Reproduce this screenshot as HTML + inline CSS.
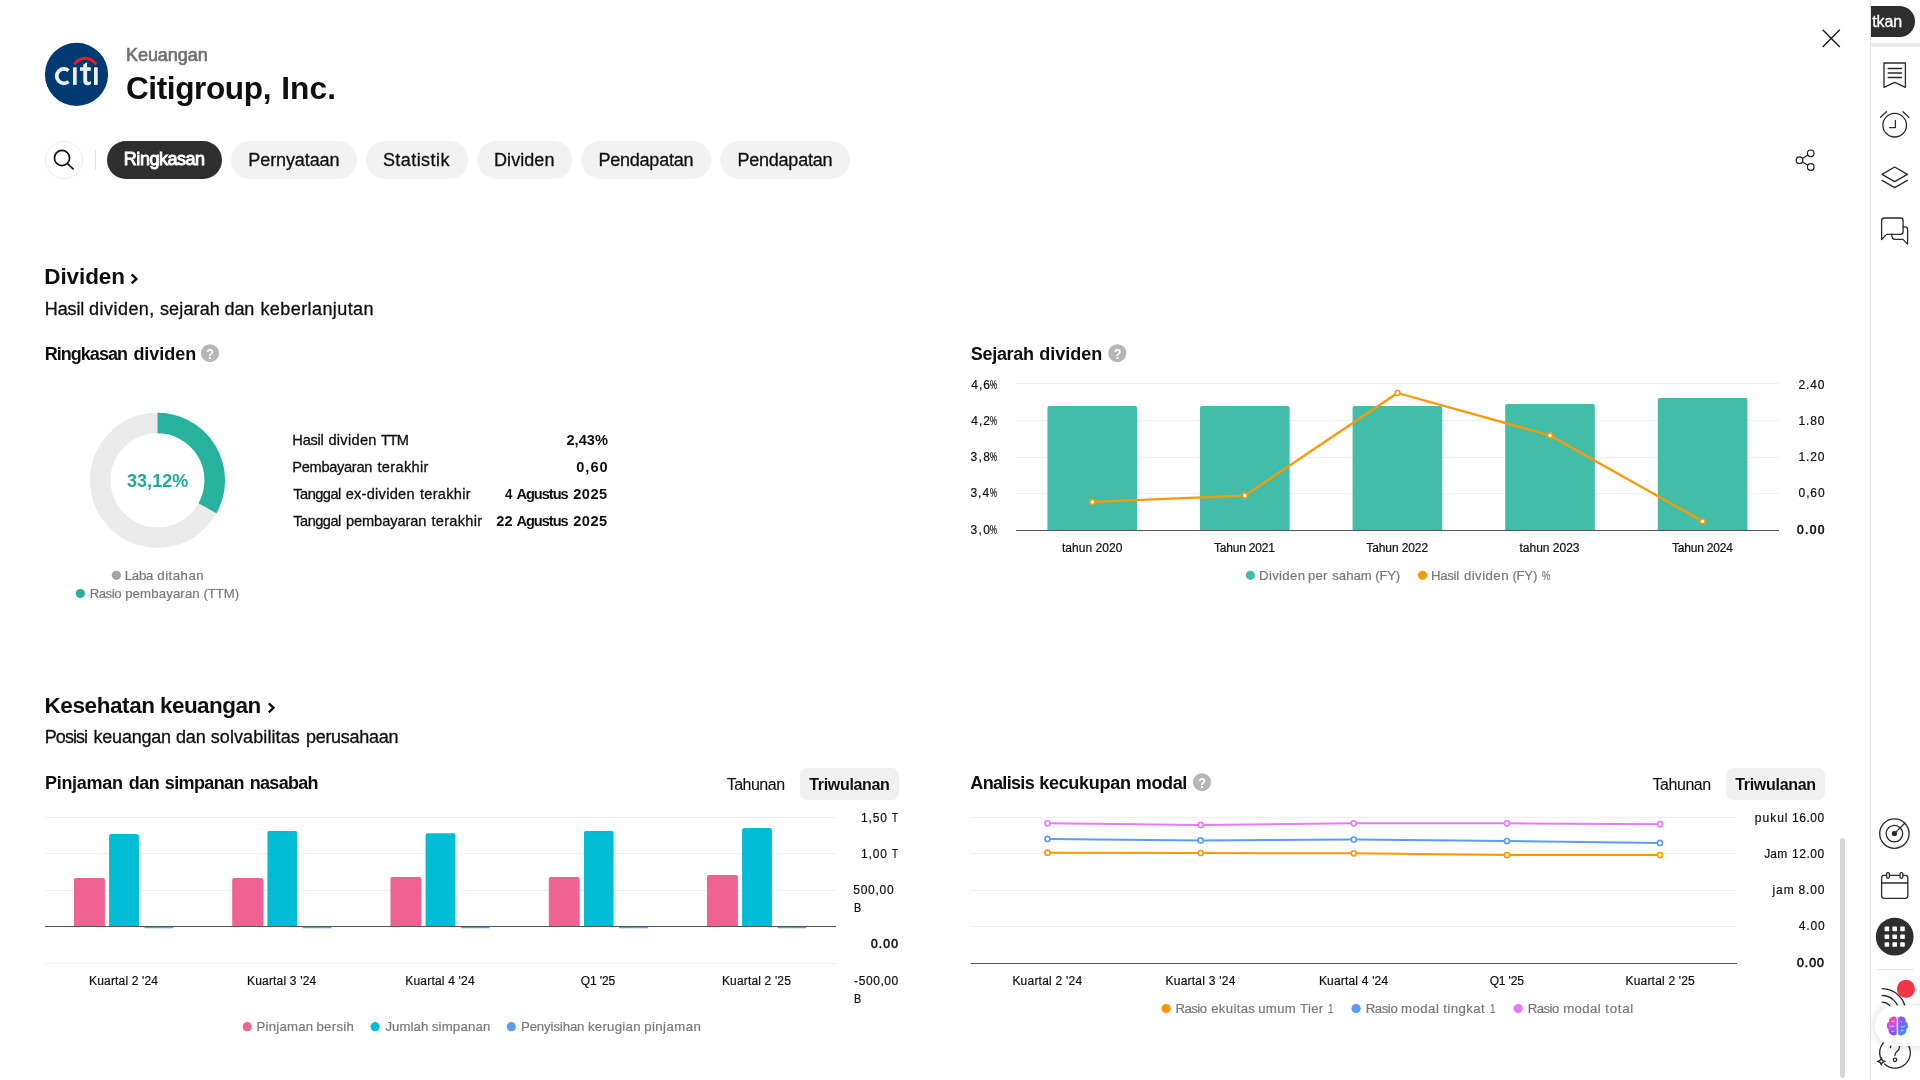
<!DOCTYPE html>
<html lang="id">
<head>
<meta charset="utf-8">
<title>Citigroup, Inc. — Keuangan</title>
<style>
html,body{margin:0;padding:0;}
body{width:1920px;height:1080px;overflow:hidden;background:#ffffff;position:relative;font-family:"Liberation Sans",sans-serif;}
.t{position:absolute;white-space:pre;line-height:1;font-family:"Liberation Sans",sans-serif;color:#0f0f0f;}
.pill{position:absolute;top:141px;height:38px;border-radius:19px;background:#f2f2f2;}
.pill.on{background:#2e2e2e;}
.seg{position:absolute;top:768px;height:32px;border-radius:7px;background:#f0f0f0;}
#txt{position:absolute;left:0;top:0;width:1920px;height:1080px;will-change:transform;}
#shapes{position:absolute;left:0;top:0;width:1920px;height:1080px;will-change:transform;}
</style>
</head>
<body>
<!-- nav pills -->
<div class="pill on" style="left:107px;width:115px"></div>
<div class="pill" style="left:231px;width:126px"></div>
<div class="pill" style="left:366px;width:102px"></div>
<div class="pill" style="left:476.5px;width:95px"></div>
<div class="pill" style="left:580.5px;width:130px"></div>
<div class="pill" style="left:719.5px;width:130px"></div>
<!-- period toggles -->
<div class="seg" style="left:800px;width:99px"></div>
<div class="seg" style="left:1726px;width:99px"></div>
<svg id="shapes" width="1920" height="1080" viewBox="0 0 1920 1080">
<g id="logo">
<circle cx="76.5" cy="74.4" r="31.6" fill="#003a72"/>
<path d="M68.53 70.58 A7.2 7.2 0 1 0 68.53 81.62" fill="none" stroke="#eef1f8" stroke-width="3.7"/>
<rect x="73" y="67.3" width="3.7" height="17.6" fill="#eef1f8"/>
<rect x="94" y="67.3" width="3.7" height="17.6" fill="#eef1f8"/>
<rect x="80" y="67.3" width="10.8" height="3.5" fill="#eef1f8"/>
<path d="M83.3 64.4 L87.1 62.3 V80.3 Q87.1 82 88.7 82 Q89.9 82 90.9 81.1 V84 Q89.5 85.2 87.6 85.2 Q83.3 85.2 83.3 81 Z" fill="#eef1f8"/>
<path d="M74.2 64.2 Q85.2 52.3 96.2 64.2" fill="none" stroke="#ee1c25" stroke-width="3"/>
</g>
<g id="search">
<circle cx="64" cy="160" r="18.5" fill="#fff" stroke="#ebebeb" stroke-width="1"/>
<circle cx="62" cy="158" r="7.55" fill="none" stroke="#131313" stroke-width="1.7"/>
<path d="M67.5 163.6 L73.6 169.4" stroke="#131313" stroke-width="1.7" fill="none"/>
<rect x="95" y="150" width="1" height="19.5" fill="#e0e0e0"/>
</g>
<path d="M1822.7 29.8 L1839.8 46.9 M1839.8 29.8 L1822.7 46.9" stroke="#1a1a1a" stroke-width="1.4" fill="none"/>
<g fill="none" stroke="#1a1a1a" stroke-width="1.2"><circle cx="1810.75" cy="153.3" r="3.3"/><circle cx="1799.5" cy="160.2" r="3.3"/><circle cx="1810.75" cy="167" r="3.3"/><path d="M1802.4 158.5 L1807.9 155 M1802.4 161.9 L1807.9 165.3"/></g>
<path d="M131.7 274.4 L136.4 278.9 L131.7 283.4" stroke="#0f0f0f" stroke-width="2.3" fill="none"/>
<path d="M268.8 703.3 L273.5 707.8 L268.8 712.3" stroke="#0f0f0f" stroke-width="2.3" fill="none"/>
<circle cx="210" cy="353.2" r="9" fill="#b6b6b6"/>
<text transform="translate(210.2 358.9) scale(0.87 1.06)" x="0" y="0" font-family="Liberation Sans, sans-serif" font-size="14.5" font-weight="700" fill="#fff" text-anchor="middle">?</text>
<circle cx="1117.3" cy="353.2" r="9" fill="#b6b6b6"/>
<text transform="translate(1117.5 358.9) scale(0.87 1.06)" x="0" y="0" font-family="Liberation Sans, sans-serif" font-size="14.5" font-weight="700" fill="#fff" text-anchor="middle">?</text>
<circle cx="1202" cy="782.2" r="9" fill="#b6b6b6"/>
<text transform="translate(1202.2 787.9000000000001) scale(0.87 1.06)" x="0" y="0" font-family="Liberation Sans, sans-serif" font-size="14.5" font-weight="700" fill="#fff" text-anchor="middle">?</text>
<circle cx="157.5" cy="480.3" r="57.25" fill="none" stroke="#ebebeb" stroke-width="20.5"/>
<path d="M157.5 423.05 A57.25 57.25 0 0 1 207.46 508.26" fill="none" stroke="#26b29d" stroke-width="20.5"/>
<circle cx="116.4" cy="575.3" r="4.6" fill="#a3a3a3"/>
<circle cx="80.4" cy="593.5" r="4.6" fill="#26b29d"/>
<rect x="1016" y="383" width="763" height="1" fill="#f0f0f0"/>
<rect x="1016" y="420" width="763" height="1" fill="#f0f0f0"/>
<rect x="1016" y="457" width="763" height="1" fill="#f0f0f0"/>
<rect x="1016" y="493" width="763" height="1" fill="#f0f0f0"/>
<path d="M1047.4 530 V408.0 Q1047.4 406.0 1049.4 406.0 H1135.0 Q1137.0 406.0 1137.0 408.0 V530 Z" fill="#42bda8"/>
<path d="M1200.0 530 V408.0 Q1200.0 406.0 1202.0 406.0 H1287.6 Q1289.6 406.0 1289.6 408.0 V530 Z" fill="#42bda8"/>
<path d="M1352.6 530 V408.0 Q1352.6 406.0 1354.6 406.0 H1440.2 Q1442.2 406.0 1442.2 408.0 V530 Z" fill="#42bda8"/>
<path d="M1505.2 530 V406.0 Q1505.2 404.0 1507.2 404.0 H1592.8 Q1594.8 404.0 1594.8 406.0 V530 Z" fill="#42bda8"/>
<path d="M1657.8 530 V400.0 Q1657.8 398.0 1659.8 398.0 H1745.4 Q1747.4 398.0 1747.4 400.0 V530 Z" fill="#42bda8"/>
<rect x="1016" y="530" width="763" height="1" fill="#555"/>
<polyline points="1092.3,501.9 1244.7,495.6 1397.5,393 1550,435.5 1702.5,521.25" fill="none" stroke="#ff9800" stroke-width="2.3" stroke-linejoin="round"/>
<circle cx="1092.3" cy="501.9" r="2.5" fill="#fff" stroke="#ff9800" stroke-width="1.5"/>
<circle cx="1244.7" cy="495.6" r="2.5" fill="#fff" stroke="#ff9800" stroke-width="1.5"/>
<circle cx="1397.5" cy="393" r="2.5" fill="#fff" stroke="#ff9800" stroke-width="1.5"/>
<circle cx="1550" cy="435.5" r="2.5" fill="#fff" stroke="#ff9800" stroke-width="1.5"/>
<circle cx="1702.5" cy="521.25" r="2.5" fill="#fff" stroke="#ff9800" stroke-width="1.5"/>
<circle cx="1250.4" cy="575.3" r="4.6" fill="#42bda8"/>
<circle cx="1422.5" cy="575.3" r="4.6" fill="#ff9800"/>
<rect x="45" y="817" width="791" height="1" fill="#f0f0f0"/>
<rect x="45" y="853" width="791" height="1" fill="#f0f0f0"/>
<rect x="45" y="890" width="791" height="1" fill="#f0f0f0"/>
<rect x="45" y="963" width="791" height="1" fill="#f0f0f0"/>
<path d="M74.0 926.0 V880.0 Q74.0 878.0 76.0 878.0 H102.9 Q104.9 878.0 104.9 880.0 V926.0 Z" fill="#f06292"/>
<path d="M109.1 926.0 V836.0 Q109.1 834.0 111.1 834.0 H136.9 Q138.9 834.0 138.9 836.0 V926.0 Z" fill="#00bcd4"/>
<rect x="144.3" y="926.4" width="29" height="1.8" rx="0.9" fill="#5b9cf6"/>
<path d="M232.2 926.0 V880.0 Q232.2 878.0 234.2 878.0 H261.1 Q263.1 878.0 263.1 880.0 V926.0 Z" fill="#f06292"/>
<path d="M267.4 926.0 V833.0 Q267.4 831.0 269.4 831.0 H295.2 Q297.2 831.0 297.2 833.0 V926.0 Z" fill="#00bcd4"/>
<rect x="302.6" y="926.4" width="29" height="1.8" rx="0.9" fill="#5b9cf6"/>
<path d="M390.5 926.0 V878.9 Q390.5 876.9 392.5 876.9 H419.4 Q421.4 876.9 421.4 878.9 V926.0 Z" fill="#f06292"/>
<path d="M425.6 926.0 V835.2 Q425.6 833.2 427.6 833.2 H453.4 Q455.4 833.2 455.4 835.2 V926.0 Z" fill="#00bcd4"/>
<rect x="460.8" y="926.4" width="29" height="1.8" rx="0.9" fill="#5b9cf6"/>
<path d="M548.8 926.0 V879.1 Q548.8 877.1 550.8 877.1 H577.6 Q579.6 877.1 579.6 879.1 V926.0 Z" fill="#f06292"/>
<path d="M583.9 926.0 V833.0 Q583.9 831.0 585.9 831.0 H611.6 Q613.6 831.0 613.6 833.0 V926.0 Z" fill="#00bcd4"/>
<rect x="619.0" y="926.4" width="29" height="1.8" rx="0.9" fill="#5b9cf6"/>
<path d="M707.0 926.0 V877.0 Q707.0 875.0 709.0 875.0 H735.9 Q737.9 875.0 737.9 877.0 V926.0 Z" fill="#f06292"/>
<path d="M742.1 926.0 V829.9 Q742.1 827.9 744.1 827.9 H769.9 Q771.9 827.9 771.9 829.9 V926.0 Z" fill="#00bcd4"/>
<rect x="777.3" y="926.4" width="29" height="1.8" rx="0.9" fill="#5b9cf6"/>
<rect x="45" y="926" width="791" height="1" fill="#555"/>
<circle cx="247.2" cy="1026.7" r="4.6" fill="#f06292"/>
<circle cx="375.1" cy="1026.7" r="4.6" fill="#00bcd4"/>
<circle cx="511.3" cy="1026.7" r="4.6" fill="#5b9cf6"/>
<rect x="971" y="817" width="766" height="1" fill="#f0f0f0"/>
<rect x="971" y="853" width="766" height="1" fill="#f0f0f0"/>
<rect x="971" y="890" width="766" height="1" fill="#f0f0f0"/>
<rect x="971" y="926" width="766" height="1" fill="#f0f0f0"/>
<rect x="971" y="963" width="766" height="1" fill="#555"/>
<polyline points="1047.5,852.7 1200.6,853 1353.7,853.3 1506.9,855.1 1660,855.1" fill="none" stroke="#ff9800" stroke-width="2" stroke-linejoin="round"/>
<circle cx="1047.5" cy="852.7" r="2.55" fill="#fff" stroke="#ff9800" stroke-width="1.6"/>
<circle cx="1200.6" cy="853" r="2.55" fill="#fff" stroke="#ff9800" stroke-width="1.6"/>
<circle cx="1353.7" cy="853.3" r="2.55" fill="#fff" stroke="#ff9800" stroke-width="1.6"/>
<circle cx="1506.9" cy="855.1" r="2.55" fill="#fff" stroke="#ff9800" stroke-width="1.6"/>
<circle cx="1660" cy="855.1" r="2.55" fill="#fff" stroke="#ff9800" stroke-width="1.6"/>
<polyline points="1047.5,838.9 1200.6,840.4 1353.7,839.5 1506.9,841 1660,842.9" fill="none" stroke="#5b9cf6" stroke-width="2" stroke-linejoin="round"/>
<circle cx="1047.5" cy="838.9" r="2.55" fill="#fff" stroke="#5b9cf6" stroke-width="1.6"/>
<circle cx="1200.6" cy="840.4" r="2.55" fill="#fff" stroke="#5b9cf6" stroke-width="1.6"/>
<circle cx="1353.7" cy="839.5" r="2.55" fill="#fff" stroke="#5b9cf6" stroke-width="1.6"/>
<circle cx="1506.9" cy="841" r="2.55" fill="#fff" stroke="#5b9cf6" stroke-width="1.6"/>
<circle cx="1660" cy="842.9" r="2.55" fill="#fff" stroke="#5b9cf6" stroke-width="1.6"/>
<polyline points="1047.5,823.3 1200.6,824.9 1353.7,823.3 1506.9,823.3 1660,824.2" fill="none" stroke="#e879f9" stroke-width="2" stroke-linejoin="round"/>
<circle cx="1047.5" cy="823.3" r="2.55" fill="#fff" stroke="#e879f9" stroke-width="1.6"/>
<circle cx="1200.6" cy="824.9" r="2.55" fill="#fff" stroke="#e879f9" stroke-width="1.6"/>
<circle cx="1353.7" cy="823.3" r="2.55" fill="#fff" stroke="#e879f9" stroke-width="1.6"/>
<circle cx="1506.9" cy="823.3" r="2.55" fill="#fff" stroke="#e879f9" stroke-width="1.6"/>
<circle cx="1660" cy="824.2" r="2.55" fill="#fff" stroke="#e879f9" stroke-width="1.6"/>
<circle cx="1166.1" cy="1008.5" r="4.6" fill="#ff9800"/>
<circle cx="1356.1" cy="1008.5" r="4.6" fill="#5b9cf6"/>
<circle cx="1518.2" cy="1008.5" r="4.6" fill="#e879f9"/>
<rect x="1840" y="838" width="5" height="240" rx="2.5" fill="#d6d6d6"/>
<g id="sidebar">
<rect x="1870" y="0" width="50" height="1080" fill="#fff"/>
<rect x="1870" y="0" width="1" height="1080" fill="#e3e3e3"/>
<path d="M1871 6 H1899.5 A15.5 15.5 0 0 1 1899.5 37 H1871 Z" fill="#2e2e2e"/>
<rect x="1871" y="43" width="49" height="4" fill="#ebebeb"/>
<g fill="none" stroke="#2a2a2a" stroke-width="1.3" stroke-linejoin="round" stroke-linecap="round"><path d="M1884 63 H1905.4 V87.3 L1894.7 82.3 L1884 87.3 Z"/><path d="M1888.2 68.5 H1901.6 M1888.2 73 H1901.6 M1888.2 77.5 H1901.6"/></g>
<g fill="none" stroke="#2a2a2a" stroke-width="1.3" stroke-linejoin="round" stroke-linecap="round"><circle cx="1894.7" cy="125.2" r="11.8"/><path d="M1895.4 120.4 V127.6 H1889.6"/><path d="M1880.6 117.2 L1886.4 111.8 M1903 111.8 L1908.8 117.2"/></g>
<g fill="none" stroke="#2a2a2a" stroke-width="1.3" stroke-linejoin="round" stroke-linecap="round"><path d="M1882 174.4 L1894.7 167 L1907.4 174.4 L1894.7 181.6 Z"/><path d="M1882 180.4 L1894.7 187.6 L1907.4 180.4"/></g>
<g fill="none" stroke="#2a2a2a" stroke-width="1.3" stroke-linejoin="round" stroke-linecap="round" stroke-width="1.4"><path d="M1891.7 234.4 Q1891.9 239.35 1894.8 239.35 H1903 L1907.6 244.1 V229.4 Q1907.6 226.8 1905 226.8 H1903.1"/><path d="M1884.4 218 H1900.3 Q1903.1 218 1903.1 220.8 V231.6 Q1903.1 234.4 1900.3 234.4 H1886.6 L1881.6 239.5 V220.8 Q1881.6 218 1884.4 218 Z"/></g>
<g fill="none" stroke="#2a2a2a" stroke-width="1.3" stroke-linejoin="round" stroke-linecap="round"><circle cx="1894.4" cy="833.6" r="14.7"/><circle cx="1894.4" cy="833.6" r="8.3"/><circle cx="1894.4" cy="833.6" r="2" fill="#2a2a2a"/><path d="M1894.4 833.6 L1905 823"/></g>
<g fill="none" stroke="#2a2a2a" stroke-width="1.3" stroke-linejoin="round" stroke-linecap="round"><rect x="1881.6" y="875.3" width="26.2" height="23" rx="2.5"/><path d="M1881.6 883 H1907.8"/><rect x="1886.6" y="872.6" width="2.8" height="5.6" rx="1.2" fill="#fff"/><rect x="1900" y="872.6" width="2.8" height="5.6" rx="1.2" fill="#fff"/></g>
<circle cx="1894.7" cy="936.7" r="18.9" fill="#2e2e2e"/>
<rect x="1884.6" y="926.6" width="4.6" height="4.6" rx="0.8" fill="#fff"/>
<rect x="1892.4" y="926.6" width="4.6" height="4.6" rx="0.8" fill="#fff"/>
<rect x="1900.2" y="926.6" width="4.6" height="4.6" rx="0.8" fill="#fff"/>
<rect x="1884.6" y="934.4" width="4.6" height="4.6" rx="0.8" fill="#fff"/>
<rect x="1892.4" y="934.4" width="4.6" height="4.6" rx="0.8" fill="#fff"/>
<rect x="1900.2" y="934.4" width="4.6" height="4.6" rx="0.8" fill="#fff"/>
<rect x="1884.6" y="942.2" width="4.6" height="4.6" rx="0.8" fill="#fff"/>
<rect x="1892.4" y="942.2" width="4.6" height="4.6" rx="0.8" fill="#fff"/>
<rect x="1900.2" y="942.2" width="4.6" height="4.6" rx="0.8" fill="#fff"/>
<rect x="1877" y="969" width="37" height="1" fill="#e6e6e6"/>
<g fill="none" stroke="#2a2a2a" stroke-width="1.3" stroke-linejoin="round" stroke-linecap="round" stroke="#1a1a1a"><path d="M1882.2 988.7 A23.5 23.5 0 0 1 1905.7 1012.2"/><path d="M1882.2 995.5 A16.7 16.7 0 0 1 1898.9 1012.2"/><path d="M1882.2 1002.2 A10 10 0 0 1 1892.2 1012.2"/></g>
<circle cx="1905.9" cy="988.9" r="9.1" fill="#f23645"/>
<g fill="none" stroke="#2a2a2a" stroke-width="1.3" stroke-linejoin="round" stroke-linecap="round" stroke="#1a1a1a"><path d="M1880.37 1057.27 A15.3 15.3 0 1 1 1884.57 1063.99"/><path d="M1890.4 1047.6 Q1890.6 1043.8 1895 1043.8 Q1899.4 1043.8 1899.4 1047.4 Q1899.4 1049.6 1897 1051.4 Q1894.9 1053 1894.9 1055.6"/><circle cx="1895" cy="1059.8" r="1.7"/><path d="M1881.3 1057.6 Q1881.7 1060.9 1885 1061.3 Q1881.7 1061.7 1881.3 1065 Q1880.9 1061.7 1877.6 1061.3 Q1880.9 1060.9 1881.3 1057.6 Z" fill="#fff"/></g>
<defs><filter id="psh" x="-50%" y="-50%" width="200%" height="200%"><feGaussianBlur stdDeviation="5"/></filter>
<linearGradient id="bl" x1="0" y1="0" x2="0.4" y2="1"><stop offset="0.1" stop-color="#ff9d3c"/><stop offset="0.32" stop-color="#ee3fc7"/><stop offset="0.6" stop-color="#c44cf0"/><stop offset="1" stop-color="#7e57f7"/></linearGradient>
<linearGradient id="br" x1="0" y1="0" x2="0.5" y2="1"><stop offset="0" stop-color="#a44df0"/><stop offset="0.5" stop-color="#6f63f5"/><stop offset="1" stop-color="#2f9bff"/></linearGradient></defs>
<path d="M1925 1006 H1895 A20 20 0 0 0 1895 1046 H1925 Z" fill="#000" opacity="0.16" filter="url(#psh)"/>
<path d="M1925 1005.5 H1895.2 A20.2 20.2 0 0 0 1895.2 1046 H1925 Z" fill="#fff"/>
<path d="M1896.7 1018.4 C1896.7 1016.7 1894.0 1015.9 1892.3 1016.8 C1889.5 1017.3 1888.4 1020.0 1889.3 1021.8 C1886.4 1022.8 1885.9 1027.6 1888.6 1029.4 C1887.8 1032.6 1890.3 1035.1 1893.0 1035.3 C1894.8 1036.1 1896.7 1035.1 1896.7 1033.6 Z" fill="url(#bl)"/>
<path d="M1898.1 1018.4 C1898.1 1016.7 1900.8 1015.9 1902.5 1016.8 C1905.3 1017.3 1906.4 1020.0 1905.5 1021.8 C1908.4 1022.8 1908.9 1027.6 1906.2 1029.4 C1907.0 1032.6 1904.5 1035.1 1901.8 1035.3 C1900.0 1036.1 1898.1 1035.1 1898.1 1033.6 Z" fill="url(#br)"/>
<g fill="none" stroke="#fff" stroke-width="0.8" opacity="0.85"><path d="M1889.5 1026.2 H1894.5 M1891.5 1021.5 Q1893.5 1020.5 1894.8 1021.8 M1891.5 1031 Q1893.3 1032 1894.6 1030.8 M1900.3 1021.2 L1902 1023 M1900.5 1026 L1902.3 1027.4 L1905 1025.6 M1900.5 1031.2 L1902 1030 L1903.5 1031"/></g>
</g>
</svg><div id="txt">
<div class="t" style="left:125.93px;top:45.90px;font-size:18px;color:#707070;-webkit-text-stroke:0.65px;letter-spacing:-0.029px;">Keuangan</div>
<div class="t" style="left:125.91px;top:72.90px;font-size:31.6px;color:#0f0f0f;font-weight:700;letter-spacing:-0.406px;">Citigroup,</div>
<div class="t" style="left:281.13px;top:72.90px;font-size:31.6px;color:#0f0f0f;font-weight:700;letter-spacing:0.130px;">Inc.</div>
<div class="t" style="left:123.85px;top:150.00px;font-size:18px;color:#ffffff;-webkit-text-stroke:0.9px;letter-spacing:-0.470px;">Ringkasan</div>
<div class="t" style="left:248.31px;top:151.00px;font-size:18px;color:#0f0f0f;-webkit-text-stroke:0.3px;letter-spacing:-0.091px;">Pernyataan</div>
<div class="t" style="left:382.88px;top:151.00px;font-size:18px;color:#0f0f0f;-webkit-text-stroke:0.3px;letter-spacing:0.444px;">Statistik</div>
<div class="t" style="left:494.01px;top:151.00px;font-size:18px;color:#0f0f0f;-webkit-text-stroke:0.3px;letter-spacing:0.064px;">Dividen</div>
<div class="t" style="left:598.51px;top:151.00px;font-size:18px;color:#0f0f0f;-webkit-text-stroke:0.3px;letter-spacing:-0.235px;">Pendapatan</div>
<div class="t" style="left:737.51px;top:151.00px;font-size:18px;color:#0f0f0f;-webkit-text-stroke:0.3px;letter-spacing:-0.235px;">Pendapatan</div>
<div class="t" style="left:44.24px;top:266.10px;font-size:22.5px;color:#0f0f0f;font-weight:700;letter-spacing:-0.081px;">Dividen</div>
<div class="t" style="left:44.81px;top:299.90px;font-size:18px;color:#0f0f0f;-webkit-text-stroke:0.3px;letter-spacing:-0.123px;">Hasil</div>
<div class="t" style="left:89.09px;top:299.90px;font-size:18px;color:#0f0f0f;-webkit-text-stroke:0.3px;letter-spacing:0.457px;">dividen,</div>
<div class="t" style="left:159.99px;top:299.90px;font-size:18px;color:#0f0f0f;-webkit-text-stroke:0.3px;letter-spacing:0.133px;">sejarah</div>
<div class="t" style="left:224.59px;top:299.90px;font-size:18px;color:#0f0f0f;-webkit-text-stroke:0.3px;letter-spacing:-0.147px;">dan</div>
<div class="t" style="left:260.45px;top:299.90px;font-size:18px;color:#0f0f0f;-webkit-text-stroke:0.3px;letter-spacing:0.420px;">keberlanjutan</div>
<div class="t" style="left:44.72px;top:344.90px;font-size:18px;color:#0f0f0f;font-weight:700;letter-spacing:-0.972px;">Ringkasan</div>
<div class="t" style="left:133.43px;top:344.90px;font-size:18px;color:#0f0f0f;font-weight:700;letter-spacing:-0.047px;">dividen</div>
<div class="t" style="left:126.99px;top:472.10px;font-size:18px;color:#22ab94;font-weight:700;letter-spacing:0.042px;">33,12%</div>
<div class="t" style="left:292.35px;top:432.80px;font-size:14.6px;color:#0f0f0f;-webkit-text-stroke:0.3px;letter-spacing:-0.242px;">Hasil</div>
<div class="t" style="left:328.43px;top:432.80px;font-size:14.6px;color:#0f0f0f;-webkit-text-stroke:0.3px;letter-spacing:0.293px;">dividen</div>
<div class="t" style="left:380.92px;top:432.80px;font-size:14.6px;color:#0f0f0f;-webkit-text-stroke:0.3px;letter-spacing:-1.045px;">TTM</div>
<div class="t" style="left:566.44px;top:432.80px;font-size:14.6px;color:#0f0f0f;font-weight:700;letter-spacing:0.014px;">2,43%</div>
<div class="t" style="left:292.35px;top:459.70px;font-size:14.6px;color:#0f0f0f;-webkit-text-stroke:0.3px;letter-spacing:-0.309px;">Pembayaran</div>
<div class="t" style="left:377.45px;top:459.70px;font-size:14.6px;color:#0f0f0f;-webkit-text-stroke:0.3px;letter-spacing:0.334px;">terakhir</div>
<div class="t" style="left:576.19px;top:459.70px;font-size:14.6px;color:#0f0f0f;font-weight:700;letter-spacing:1.027px;">0,60</div>
<div class="t" style="left:293.32px;top:486.70px;font-size:14.6px;color:#0f0f0f;-webkit-text-stroke:0.3px;letter-spacing:-0.538px;">Tanggal</div>
<div class="t" style="left:345.64px;top:486.70px;font-size:14.6px;color:#0f0f0f;-webkit-text-stroke:0.3px;letter-spacing:0.268px;">ex-dividen</div>
<div class="t" style="left:419.95px;top:486.70px;font-size:14.6px;color:#0f0f0f;-webkit-text-stroke:0.3px;letter-spacing:0.277px;">terakhir</div>
<div class="t" style="left:504.92px;top:486.70px;font-size:14.6px;color:#0f0f0f;font-weight:700;transform:scaleX(0.912);transform-origin:0 0;">4</div>
<div class="t" style="left:516.51px;top:486.70px;font-size:14.6px;color:#0f0f0f;font-weight:700;letter-spacing:-1.041px;">Agustus</div>
<div class="t" style="left:573.24px;top:486.70px;font-size:14.6px;color:#0f0f0f;font-weight:700;letter-spacing:0.465px;">2025</div>
<div class="t" style="left:293.32px;top:513.70px;font-size:14.6px;color:#0f0f0f;-webkit-text-stroke:0.3px;letter-spacing:-0.538px;">Tanggal</div>
<div class="t" style="left:345.92px;top:513.70px;font-size:14.6px;color:#0f0f0f;-webkit-text-stroke:0.3px;letter-spacing:-0.062px;">pembayaran</div>
<div class="t" style="left:431.45px;top:513.70px;font-size:14.6px;color:#0f0f0f;-webkit-text-stroke:0.3px;letter-spacing:0.277px;">terakhir</div>
<div class="t" style="left:496.14px;top:513.70px;font-size:14.6px;color:#0f0f0f;font-weight:700;letter-spacing:0.155px;">22</div>
<div class="t" style="left:516.51px;top:513.70px;font-size:14.6px;color:#0f0f0f;font-weight:700;letter-spacing:-1.041px;">Agustus</div>
<div class="t" style="left:573.24px;top:513.70px;font-size:14.6px;color:#0f0f0f;font-weight:700;letter-spacing:0.465px;">2025</div>
<div class="t" style="left:124.87px;top:568.60px;font-size:13.2px;color:#787878;-webkit-text-stroke:0.2px;letter-spacing:-0.319px;">Laba</div>
<div class="t" style="left:157.34px;top:568.60px;font-size:13.2px;color:#787878;-webkit-text-stroke:0.2px;letter-spacing:0.492px;">ditahan</div>
<div class="t" style="left:89.67px;top:586.70px;font-size:13.2px;color:#787878;-webkit-text-stroke:0.2px;letter-spacing:-0.449px;">Rasio</div>
<div class="t" style="left:125.13px;top:586.70px;font-size:13.2px;color:#787878;-webkit-text-stroke:0.2px;letter-spacing:0.140px;">pembayaran</div>
<div class="t" style="left:203.39px;top:586.70px;font-size:13.2px;color:#787878;-webkit-text-stroke:0.2px;letter-spacing:-0.055px;">(TTM)</div>
<div class="t" style="left:970.71px;top:344.90px;font-size:18px;color:#0f0f0f;font-weight:700;letter-spacing:-0.278px;">Sejarah</div>
<div class="t" style="left:1039.13px;top:344.90px;font-size:18px;color:#0f0f0f;font-weight:700;letter-spacing:0.011px;">dividen</div>
<div class="t" style="left:971.33px;top:379.00px;font-size:12px;color:#0f0f0f;-webkit-text-stroke:0.2px;letter-spacing:0.955px;">4,6</div>
<div class="t" style="left:990.31px;top:379.00px;font-size:12px;color:#0f0f0f;-webkit-text-stroke:0.2px;transform:scaleX(0.656);transform-origin:0 0;">%</div>
<div class="t" style="left:971.33px;top:414.80px;font-size:12px;color:#0f0f0f;-webkit-text-stroke:0.2px;letter-spacing:0.952px;">4,2</div>
<div class="t" style="left:990.31px;top:414.80px;font-size:12px;color:#0f0f0f;-webkit-text-stroke:0.2px;transform:scaleX(0.656);transform-origin:0 0;">%</div>
<div class="t" style="left:970.50px;top:450.70px;font-size:12px;color:#0f0f0f;-webkit-text-stroke:0.2px;letter-spacing:1.365px;">3,8</div>
<div class="t" style="left:990.31px;top:450.70px;font-size:12px;color:#0f0f0f;-webkit-text-stroke:0.2px;transform:scaleX(0.656);transform-origin:0 0;">%</div>
<div class="t" style="left:970.50px;top:486.60px;font-size:12px;color:#0f0f0f;-webkit-text-stroke:0.2px;letter-spacing:0.948px;">3,4</div>
<div class="t" style="left:990.31px;top:486.60px;font-size:12px;color:#0f0f0f;-webkit-text-stroke:0.2px;transform:scaleX(0.656);transform-origin:0 0;">%</div>
<div class="t" style="left:970.50px;top:523.50px;font-size:12px;color:#0f0f0f;-webkit-text-stroke:0.2px;letter-spacing:1.354px;">3,0</div>
<div class="t" style="left:990.31px;top:523.50px;font-size:12px;color:#0f0f0f;-webkit-text-stroke:0.2px;transform:scaleX(0.656);transform-origin:0 0;">%</div>
<div class="t" style="left:1061.95px;top:542.10px;font-size:12px;color:#0f0f0f;-webkit-text-stroke:0.2px;letter-spacing:0.036px;">tahun 2020</div>
<div class="t" style="left:1214.03px;top:542.10px;font-size:12px;color:#0f0f0f;-webkit-text-stroke:0.2px;letter-spacing:-0.202px;">Tahun 2021</div>
<div class="t" style="left:1366.33px;top:542.10px;font-size:12px;color:#0f0f0f;-webkit-text-stroke:0.2px;letter-spacing:-0.111px;">Tahun 2022</div>
<div class="t" style="left:1519.55px;top:542.10px;font-size:12px;color:#0f0f0f;-webkit-text-stroke:0.2px;letter-spacing:-0.008px;">tahun 2023</div>
<div class="t" style="left:1672.03px;top:542.10px;font-size:12px;color:#0f0f0f;-webkit-text-stroke:0.2px;letter-spacing:-0.198px;">Tahun 2024</div>
<div class="t" style="left:1798.53px;top:379.00px;font-size:12px;color:#0f0f0f;-webkit-text-stroke:0.2px;letter-spacing:0.890px;">2.40</div>
<div class="t" style="left:1798.42px;top:414.80px;font-size:12px;color:#0f0f0f;-webkit-text-stroke:0.2px;letter-spacing:0.926px;">1.80</div>
<div class="t" style="left:1798.42px;top:450.70px;font-size:12px;color:#0f0f0f;-webkit-text-stroke:0.2px;letter-spacing:0.926px;">1.20</div>
<div class="t" style="left:1798.61px;top:486.60px;font-size:12px;color:#0f0f0f;-webkit-text-stroke:0.2px;letter-spacing:0.863px;">0,60</div>
<div class="t" style="left:1797.02px;top:523.50px;font-size:12px;color:#0f0f0f;-webkit-text-stroke:0.6px;letter-spacing:1.363px;">0.00</div>
<div class="t" style="left:1259.07px;top:568.60px;font-size:13.2px;color:#787878;-webkit-text-stroke:0.2px;letter-spacing:0.320px;">Dividen</div>
<div class="t" style="left:1307.93px;top:568.60px;font-size:13.2px;color:#787878;-webkit-text-stroke:0.2px;letter-spacing:0.232px;">per</div>
<div class="t" style="left:1332.24px;top:568.60px;font-size:13.2px;color:#787878;-webkit-text-stroke:0.2px;letter-spacing:-0.015px;">saham</div>
<div class="t" style="left:1375.34px;top:568.60px;font-size:13.2px;color:#787878;-webkit-text-stroke:0.2px;letter-spacing:-0.299px;">(FY)</div>
<div class="t" style="left:1431.07px;top:568.60px;font-size:13.2px;color:#787878;-webkit-text-stroke:0.2px;letter-spacing:-0.321px;">Hasil</div>
<div class="t" style="left:1463.94px;top:568.60px;font-size:13.2px;color:#787878;-webkit-text-stroke:0.2px;letter-spacing:0.457px;">dividen</div>
<div class="t" style="left:1512.44px;top:568.60px;font-size:13.2px;color:#787878;-webkit-text-stroke:0.2px;letter-spacing:-0.266px;">(FY)</div>
<div class="t" style="left:1541.70px;top:568.60px;font-size:13.2px;color:#787878;-webkit-text-stroke:0.2px;transform:scaleX(0.714);transform-origin:0 0;">%</div>
<div class="t" style="left:44.54px;top:694.70px;font-size:22.5px;color:#0f0f0f;font-weight:700;letter-spacing:-0.420px;">Kesehatan</div>
<div class="t" style="left:159.90px;top:694.70px;font-size:22.5px;color:#0f0f0f;font-weight:700;letter-spacing:-0.516px;">keuangan</div>
<div class="t" style="left:44.81px;top:728.00px;font-size:18px;color:#0f0f0f;-webkit-text-stroke:0.3px;letter-spacing:-0.938px;">Posisi</div>
<div class="t" style="left:93.55px;top:728.00px;font-size:18px;color:#0f0f0f;-webkit-text-stroke:0.3px;letter-spacing:-0.222px;">keuangan</div>
<div class="t" style="left:175.99px;top:728.00px;font-size:18px;color:#0f0f0f;-webkit-text-stroke:0.3px;letter-spacing:-0.147px;">dan</div>
<div class="t" style="left:210.69px;top:728.00px;font-size:18px;color:#0f0f0f;-webkit-text-stroke:0.3px;letter-spacing:0.100px;">solvabilitas</div>
<div class="t" style="left:305.95px;top:728.00px;font-size:18px;color:#0f0f0f;-webkit-text-stroke:0.3px;letter-spacing:-0.284px;">perusahaan</div>
<div class="t" style="left:44.92px;top:773.90px;font-size:18px;color:#0f0f0f;font-weight:700;letter-spacing:-0.268px;">Pinjaman</div>
<div class="t" style="left:128.63px;top:773.90px;font-size:18px;color:#0f0f0f;font-weight:700;letter-spacing:-0.441px;">dan</div>
<div class="t" style="left:164.77px;top:773.90px;font-size:18px;color:#0f0f0f;font-weight:700;letter-spacing:-0.618px;">simpanan</div>
<div class="t" style="left:249.82px;top:773.90px;font-size:18px;color:#0f0f0f;font-weight:700;letter-spacing:-0.729px;">nasabah</div>
<div class="t" style="left:726.71px;top:777.30px;font-size:16px;color:#0f0f0f;-webkit-text-stroke:0.1px;letter-spacing:-0.509px;">Tahunan</div>
<div class="t" style="left:809.22px;top:777.30px;font-size:16px;color:#0f0f0f;font-weight:700;letter-spacing:-0.325px;">Triwulanan</div>
<div class="t" style="left:861.02px;top:811.70px;font-size:12px;color:#0f0f0f;-webkit-text-stroke:0.2px;letter-spacing:0.859px;">1,50</div>
<div class="t" style="left:891.93px;top:811.70px;font-size:12px;color:#0f0f0f;-webkit-text-stroke:0.2px;transform:scaleX(0.822);transform-origin:0 0;">T</div>
<div class="t" style="left:861.02px;top:847.90px;font-size:12px;color:#0f0f0f;-webkit-text-stroke:0.2px;letter-spacing:0.859px;">1,00</div>
<div class="t" style="left:891.93px;top:847.90px;font-size:12px;color:#0f0f0f;-webkit-text-stroke:0.2px;transform:scaleX(0.822);transform-origin:0 0;">T</div>
<div class="t" style="left:853.27px;top:883.60px;font-size:12px;color:#0f0f0f;-webkit-text-stroke:0.2px;letter-spacing:0.747px;">500,00</div>
<div class="t" style="left:854.08px;top:901.60px;font-size:12px;color:#0f0f0f;-webkit-text-stroke:0.2px;transform:scaleX(0.899);transform-origin:0 0;">B</div>
<div class="t" style="left:870.92px;top:937.70px;font-size:12px;color:#0f0f0f;-webkit-text-stroke:0.6px;letter-spacing:1.229px;">0.00</div>
<div class="t" style="left:854.10px;top:974.60px;font-size:12px;color:#0f0f0f;-webkit-text-stroke:0.2px;letter-spacing:0.584px;">-500,00</div>
<div class="t" style="left:854.08px;top:992.60px;font-size:12px;color:#0f0f0f;-webkit-text-stroke:0.2px;transform:scaleX(0.899);transform-origin:0 0;">B</div>
<div class="t" style="left:89.09px;top:975.10px;font-size:12px;color:#0f0f0f;-webkit-text-stroke:0.2px;letter-spacing:0.157px;">Kuartal 2 '24</div>
<div class="t" style="left:246.99px;top:975.10px;font-size:12px;color:#0f0f0f;-webkit-text-stroke:0.2px;letter-spacing:0.182px;">Kuartal 3 '24</div>
<div class="t" style="left:405.29px;top:975.10px;font-size:12px;color:#0f0f0f;-webkit-text-stroke:0.2px;letter-spacing:0.190px;">Kuartal 4 '24</div>
<div class="t" style="left:580.84px;top:975.10px;font-size:12px;color:#0f0f0f;-webkit-text-stroke:0.2px;letter-spacing:-0.129px;">Q1 '25</div>
<div class="t" style="left:721.89px;top:975.10px;font-size:12px;color:#0f0f0f;-webkit-text-stroke:0.2px;letter-spacing:0.167px;">Kuartal 2 '25</div>
<div class="t" style="left:256.57px;top:1019.60px;font-size:13.2px;color:#787878;-webkit-text-stroke:0.2px;letter-spacing:0.210px;">Pinjaman</div>
<div class="t" style="left:316.38px;top:1019.60px;font-size:13.2px;color:#787878;-webkit-text-stroke:0.2px;letter-spacing:0.321px;">bersih</div>
<div class="t" style="left:385.42px;top:1019.60px;font-size:13.2px;color:#787878;-webkit-text-stroke:0.2px;letter-spacing:0.086px;">Jumlah</div>
<div class="t" style="left:431.74px;top:1019.60px;font-size:13.2px;color:#787878;-webkit-text-stroke:0.2px;letter-spacing:0.207px;">simpanan</div>
<div class="t" style="left:520.97px;top:1019.60px;font-size:13.2px;color:#787878;-webkit-text-stroke:0.2px;letter-spacing:-0.114px;">Penyisihan</div>
<div class="t" style="left:587.88px;top:1019.60px;font-size:13.2px;color:#787878;-webkit-text-stroke:0.2px;letter-spacing:0.296px;">kerugian</div>
<div class="t" style="left:644.13px;top:1019.60px;font-size:13.2px;color:#787878;-webkit-text-stroke:0.2px;letter-spacing:0.460px;">pinjaman</div>
<div class="t" style="left:970.37px;top:773.90px;font-size:18px;color:#0f0f0f;font-weight:700;letter-spacing:-0.676px;">Analisis</div>
<div class="t" style="left:1039.22px;top:773.90px;font-size:18px;color:#0f0f0f;font-weight:700;letter-spacing:-0.297px;">kecukupan</div>
<div class="t" style="left:1135.72px;top:773.90px;font-size:18px;color:#0f0f0f;font-weight:700;letter-spacing:-0.338px;">modal</div>
<div class="t" style="left:1652.41px;top:777.30px;font-size:16px;color:#0f0f0f;-webkit-text-stroke:0.1px;letter-spacing:-0.426px;">Tahunan</div>
<div class="t" style="left:1735.22px;top:777.30px;font-size:16px;color:#0f0f0f;font-weight:700;letter-spacing:-0.303px;">Triwulanan</div>
<div class="t" style="left:1754.86px;top:811.80px;font-size:12px;color:#0f0f0f;-webkit-text-stroke:0.2px;letter-spacing:0.989px;">pukul</div>
<div class="t" style="left:1792.02px;top:811.80px;font-size:12px;color:#0f0f0f;-webkit-text-stroke:0.2px;letter-spacing:0.518px;">16.00</div>
<div class="t" style="left:1764.22px;top:847.90px;font-size:12px;color:#0f0f0f;-webkit-text-stroke:0.2px;letter-spacing:0.138px;">Jam</div>
<div class="t" style="left:1792.02px;top:847.90px;font-size:12px;color:#0f0f0f;-webkit-text-stroke:0.2px;letter-spacing:0.518px;">12.00</div>
<div class="t" style="left:1772.41px;top:883.60px;font-size:12px;color:#0f0f0f;-webkit-text-stroke:0.2px;letter-spacing:1.041px;">jam</div>
<div class="t" style="left:1798.54px;top:883.60px;font-size:12px;color:#0f0f0f;-webkit-text-stroke:0.2px;letter-spacing:0.818px;">8.00</div>
<div class="t" style="left:1798.73px;top:919.70px;font-size:12px;color:#0f0f0f;-webkit-text-stroke:0.2px;letter-spacing:0.855px;">4.00</div>
<div class="t" style="left:1797.02px;top:956.70px;font-size:12.3px;color:#0f0f0f;-webkit-text-stroke:0.6px;letter-spacing:0.988px;">0.00</div>
<div class="t" style="left:1012.39px;top:974.60px;font-size:12px;color:#0f0f0f;-webkit-text-stroke:0.2px;letter-spacing:0.224px;">Kuartal 2 '24</div>
<div class="t" style="left:1165.49px;top:974.60px;font-size:12px;color:#0f0f0f;-webkit-text-stroke:0.2px;letter-spacing:0.240px;">Kuartal 3 '24</div>
<div class="t" style="left:1318.89px;top:974.60px;font-size:12px;color:#0f0f0f;-webkit-text-stroke:0.2px;letter-spacing:0.190px;">Kuartal 4 '24</div>
<div class="t" style="left:1489.64px;top:974.60px;font-size:12px;color:#0f0f0f;-webkit-text-stroke:0.2px;letter-spacing:-0.129px;">Q1 '25</div>
<div class="t" style="left:1625.49px;top:974.60px;font-size:12px;color:#0f0f0f;-webkit-text-stroke:0.2px;letter-spacing:0.192px;">Kuartal 2 '25</div>
<div class="t" style="left:1175.57px;top:1001.80px;font-size:13.2px;color:#787878;-webkit-text-stroke:0.2px;letter-spacing:-0.549px;">Rasio</div>
<div class="t" style="left:1211.13px;top:1001.80px;font-size:13.2px;color:#787878;-webkit-text-stroke:0.2px;letter-spacing:0.339px;">ekuitas</div>
<div class="t" style="left:1258.14px;top:1001.80px;font-size:13.2px;color:#787878;-webkit-text-stroke:0.2px;letter-spacing:0.342px;">umum</div>
<div class="t" style="left:1300.03px;top:1001.80px;font-size:13.2px;color:#787878;-webkit-text-stroke:0.2px;letter-spacing:0.321px;">Tier</div>
<div class="t" style="left:1327.81px;top:1001.80px;font-size:13.2px;color:#787878;-webkit-text-stroke:0.2px;transform:scaleX(0.751);transform-origin:0 0;">1</div>
<div class="t" style="left:1365.67px;top:1001.80px;font-size:13.2px;color:#787878;-webkit-text-stroke:0.2px;letter-spacing:-0.411px;">Rasio</div>
<div class="t" style="left:1401.03px;top:1001.80px;font-size:13.2px;color:#787878;-webkit-text-stroke:0.2px;letter-spacing:0.484px;">modal</div>
<div class="t" style="left:1443.14px;top:1001.80px;font-size:13.2px;color:#787878;-webkit-text-stroke:0.2px;letter-spacing:0.464px;">tingkat</div>
<div class="t" style="left:1489.71px;top:1001.80px;font-size:13.2px;color:#787878;-webkit-text-stroke:0.2px;transform:scaleX(0.751);transform-origin:0 0;">1</div>
<div class="t" style="left:1527.82px;top:1001.80px;font-size:13.2px;color:#787878;-webkit-text-stroke:0.2px;letter-spacing:-0.574px;">Rasio</div>
<div class="t" style="left:1563.13px;top:1001.80px;font-size:13.2px;color:#787878;-webkit-text-stroke:0.2px;letter-spacing:0.434px;">modal</div>
<div class="t" style="left:1605.29px;top:1001.80px;font-size:13.2px;color:#787878;-webkit-text-stroke:0.2px;letter-spacing:0.767px;">total</div>
<div class="t" style="left:1872.25px;top:13.90px;font-size:16px;color:#ffffff;-webkit-text-stroke:0.3px;letter-spacing:-0.148px;">tkan</div>
</div>
</body></html>
